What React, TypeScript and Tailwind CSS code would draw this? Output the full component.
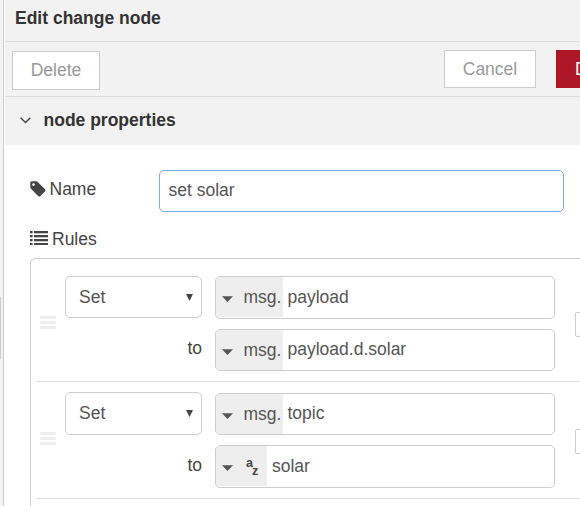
import React from "react";

function Caret() {
  return (
    <svg className="mt-1 h-[6px] w-[11px] shrink-0" viewBox="0 0 11 6" fill="#555">
      <path d="M0 0.3h11L5.5 6z" />
    </svg>
  );
}

function TagIcon() {
  return (
    <svg className="-ml-px -mt-[2px] h-[18px] w-[18px] shrink-0" viewBox="0 0 1792 1792" fill="#444">
      <path d="M576 448q0-53-37.5-90.5t-90.5-37.5-90.5 37.5-37.5 90.5 37.5 90.5 90.5 37.5 90.5-37.5 37.5-90.5zm1067 576q0 53-37 90l-491 492q-39 37-91 37-53 0-90-37l-715-716q-38-37-64.5-101t-26.5-117v-416q0-52 38-90t90-38h416q53 0 117 26.5t102 64.5l715 714q37 39 37 91z" />
    </svg>
  );
}

function ListIcon() {
  return (
    <svg className="-mt-px h-[14px] w-[18px] shrink-0" viewBox="0 0 18 14" fill="#444">
      {[0, 4, 8, 12].map((y) => (
        <g key={y}>
          <rect x="0" y={y} width="2.6" height="2.3" />
          <rect x="4" y={y} width="14" height="2.3" />
        </g>
      ))}
    </svg>
  );
}

function Grip() {
  return (
    <div className="flex w-4 flex-col gap-[2px]">
      <div className="h-[3px] rounded-[1px] bg-[#eee]" />
      <div className="h-[3px] rounded-[1px] bg-[#eee]" />
      <div className="h-[3px] rounded-[1px] bg-[#eee]" />
    </div>
  );
}

function TypedInput({ text, height, line = "leading-[38px]", textType = false }: { text: string; height: string; line?: string; textType?: boolean }) {
  return (
    <div className={`flex w-[340px] shrink-0 overflow-hidden rounded-[5px] border border-[#ccc] bg-white ${height}`}>
      <div className={`flex h-10 shrink-0 items-center bg-[#eee] pl-[6px] ${textType ? "w-[51px]" : "w-[67px]"}`}>
        <Caret />
        {textType ? (
          <div className="ml-[13px] mt-[2px] flex items-start text-[12.5px] leading-3 font-bold text-[#444]">
            <span>a</span>
            <span className="-ml-px mt-2">z</span>
          </div>
        ) : (
          <span className="-mt-px ml-[10.5px]">msg.</span>
        )}
      </div>
      <span className={`h-10 ${textType ? "ml-[5px]" : "ml-[4.5px]"} ${line}`}>{text}</span>
    </div>
  );
}

function Select({ height }: { height: string }) {
  return (
    <div className={`flex w-[137px] items-center justify-between rounded-[5px] border border-[#ccc] bg-white pl-[13px] pr-2 ${height}`}>
      <span className="-mt-px">Set</span>
      <svg className="h-[7px] w-[7px]" viewBox="0 0 7 7" fill="#444">
        <path d="M0 0h7L3.5 7z" />
      </svg>
    </div>
  );
}

export default function App() {
  return (
    <div className="flex h-[506px] w-[580px] overflow-hidden bg-white font-['Liberation_Sans',Arial,sans-serif] text-[17.5px] leading-5 text-[#555]">
      <div className="w-1 shrink-0 border-r border-[#ccc] bg-[#f3f3f3] pt-[297px]">
        <div className="h-[62px] w-px bg-[#ccc]" />
      </div>
      <div className="ml-px w-[575px] shrink-0 overflow-hidden">
        <header className="h-[42px] border-b border-[#ddd] bg-[#f2f2f2] pl-[10px] pt-2 font-bold text-[#333]">
          Edit change node
        </header>
        <div className="flex h-[55px] border-b border-[#ddd] bg-[#f2f2f2] pl-[7px] pt-2 text-[#999]">
          <button className="mt-px h-[39px] w-[88px] shrink-0 border border-[#ccc] bg-white pb-[2px]">Delete</button>
          <button className="ml-[344px] h-[38px] w-[92px] shrink-0 border border-[#ccc] bg-white">Cancel</button>
          <button className="ml-5 h-[38px] w-[92px] shrink-0 bg-[#ad1625] pl-[19px] text-left text-white">Done</button>
        </div>
        <div className="flex h-12 items-center bg-[#f2f2f2] pl-[15px] font-bold text-[#333]">
          <svg className="-mt-[2px] h-[7px] w-[11px]" viewBox="0 0 11 7" fill="none" stroke="#444" strokeWidth="1.4">
            <path d="M0.7 0.8L5.5 5.6L10.3 0.8" />
          </svg>
          <span className="-mt-[2px] ml-[12.5px]">node properties</span>
        </div>
        <div className="flex pl-[25px] pt-[25px]">
          <div className="flex h-10 w-[129px] items-center text-[#444]">
            <TagIcon />
            <span className="-mt-[2px] ml-[2.5px]">Name</span>
          </div>
          <div className="h-[42px] w-[405px] rounded-[5px] border border-[#76a9e8] pl-[8.5px] leading-[38px]">set solar</div>
        </div>
        <div className="flex h-[46px] items-center pl-[25px] pt-[7px] text-[#444]">
          <ListIcon />
          <span className="ml-1">Rules</span>
        </div>
        <div className="ml-[25px] h-[300px] w-[620px] rounded-[5px] border border-[#ccc] pl-[6px]">
          <div className="flex h-[123px] border-b border-[#ddd] pl-[3px] pt-[17px]">
            <div className="w-[25px] shrink-0 pt-10"><Grip /></div>
            <div className="w-[150px] shrink-0">
              <Select height="h-[42px]" />
              <div className="mt-5 w-[137px] text-right text-[#444]">to</div>
            </div>
            <div className="flex flex-col gap-[10px]">
              <TypedInput text="payload" height="h-[43px]" line="leading-10" />
              <TypedInput text="payload.d.solar" height="h-[42px]" />
            </div>
            <div className="ml-5 mt-9 h-[25px] w-[25px] shrink-0 rounded-[2px] border border-[#ccc]" />
          </div>
          <div className="flex h-[117px] border-b border-[#ddd] pl-[3px] pt-[10px]">
            <div className="w-[25px] shrink-0 pt-10"><Grip /></div>
            <div className="w-[150px] shrink-0">
              <Select height="h-[43px]" />
              <div className="mt-5 w-[137px] text-right text-[#444]">to</div>
            </div>
            <div className="flex flex-col gap-[10px] pt-px">
              <TypedInput text="topic" height="h-[42px]" />
              <TypedInput text="solar" height="h-[43px]" line="leading-10" textType />
            </div>
            <div className="ml-5 mt-[37px] h-[25px] w-[25px] shrink-0 rounded-[2px] border border-[#ccc]" />
          </div>
        </div>
      </div>
    </div>
  );
}
